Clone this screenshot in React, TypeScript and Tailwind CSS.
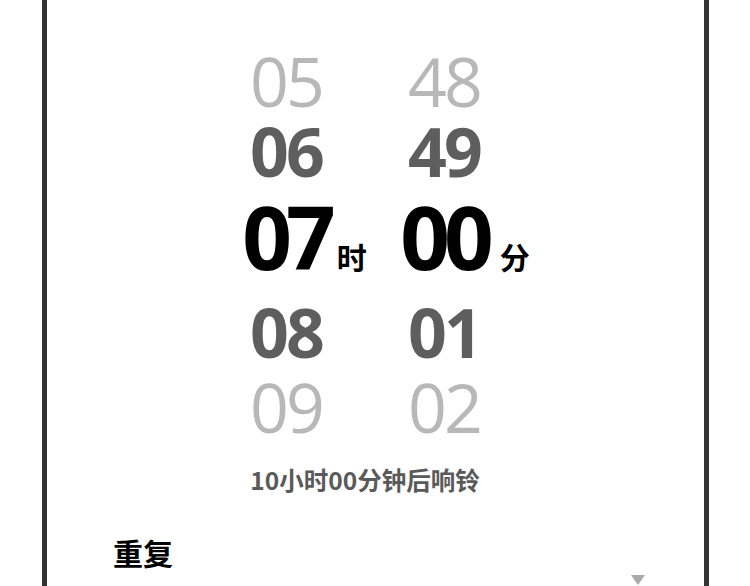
import React from "react";

const rowStyles = [
  "text-[68px] leading-[70px] font-normal tracking-[-3px] text-[#b8b8b8]",
  "text-[68px] leading-[70px] font-bold tracking-[-3px] text-[#5e5e5e]",
  "text-[87px] leading-[101px] font-bold tracking-[-6px] text-black",
  "text-[68px] leading-[90px] font-bold tracking-[-3px] text-[#5e5e5e]",
  "text-[68px] leading-[60px] font-normal tracking-[-3px] text-[#b8b8b8]",
];

function Column({
  values,
  unit,
  unitClass,
}: {
  values: string[];
  unit: string;
  unitClass: string;
}) {
  return (
    <div className="flex w-[120px] flex-col items-center">
      {values.map((v, i) => (
        <div key={i} className={rowStyles[i] + " text-center"}>
          {i === 2 ? (
            <span className="relative inline-block">
              {v}
              <span
                className={
                  "absolute left-full bottom-[16px] whitespace-nowrap text-[30px] leading-none font-bold tracking-normal text-black " +
                  unitClass
                }
                style={{ fontFamily: '"Noto Sans CJK SC", sans-serif' }}
              >
                {unit}
              </span>
            </span>
          ) : (
            <span className="inline-block">{v}</span>
          )}
        </div>
      ))}
    </div>
  );
}

export default function App() {
  return (
    <div className="h-[586px] w-[750px] overflow-hidden bg-white">
      <div className="ml-[42px] h-full w-[667px] border-x-[5px] border-[#333333]">
        <div
          className="ml-[179px] w-[278px] pt-[46px]"
          style={{ fontFamily: '"Open Sans", sans-serif' }}
        >
          <div className="flex justify-between">
            <Column values={["05", "06", "07", "08", "09"]} unit="时" unitClass="ml-[7px]" />
            <Column values={["48", "49", "00", "01", "02"]} unit="分" unitClass="ml-[12px]" />
          </div>
          <div
            className="mt-[31px] whitespace-nowrap text-center text-[24.5px] leading-[24px] font-bold text-[#5a5a5a]"
            style={{ fontFamily: '"Noto Sans CJK SC", sans-serif' }}
          >
            10小时00分钟后响铃
          </div>
        </div>
        <div
          className="mt-[46px] pl-[66px] text-[30px] leading-[29px] font-bold text-black"
          style={{ fontFamily: '"Noto Sans CJK SC", sans-serif' }}
        >
          重复
        </div>
        <div className="mt-[8px] flex justify-end pr-[59px]">
          <div className="h-0 w-0 border-x-[7.5px] border-t-[10px] border-x-transparent border-t-[#aaaaaa]" />
        </div>
      </div>
    </div>
  );
}
